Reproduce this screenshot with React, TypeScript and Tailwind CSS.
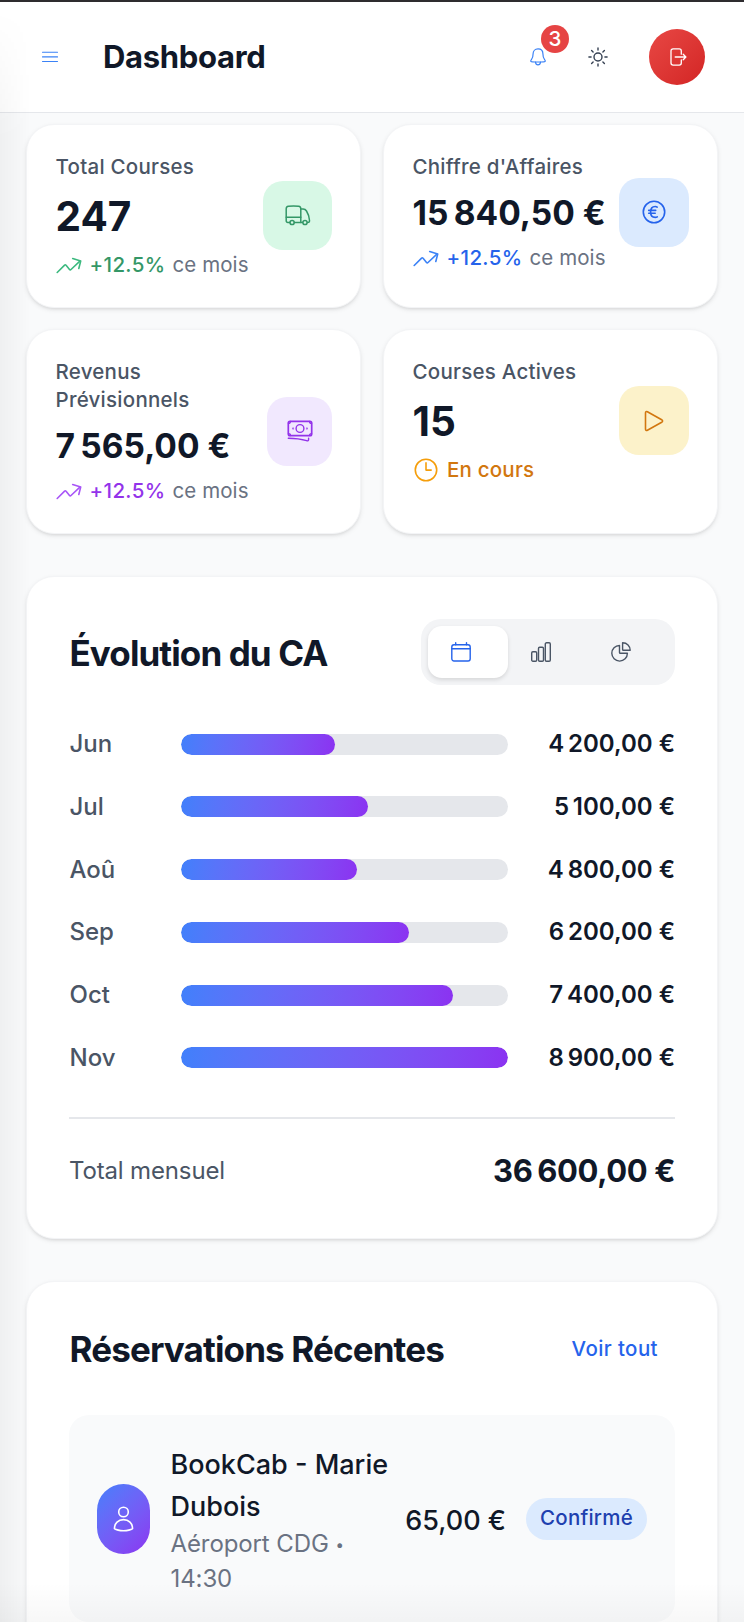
import React from 'react';

interface IconProps {
  className?: string;
}

interface StatCardProps {
  label: string;
  labelClass?: string;
  value: string;
  valueClass: string;
  tileClass: string;
  icon: React.ReactNode;
  footer: React.ReactNode;
}

interface MonthRevenue {
  month: string;
  amount: number;
}

const revenues: MonthRevenue[] = [
  { month: 'Jun', amount: 4200 },
  { month: 'Jul', amount: 5100 },
  { month: 'Aoû', amount: 4800 },
  { month: 'Sep', amount: 6200 },
  { month: 'Oct', amount: 7400 },
  { month: 'Nov', amount: 8900 },
];

const maxRevenue = Math.max(...revenues.map((r) => r.amount));
const totalRevenue = revenues.reduce((sum, r) => sum + r.amount, 0);

const formatEuro = (amount: number) => {
  const [units, cents] = amount.toFixed(2).split('.');
  return `${units.replace(/\B(?=(\d{3})+(?!\d))/g, ' ')},${cents} €`;
};

// The thousands separator is a narrow gap, the one before the euro sign a regular space
const Money: React.FC<{ amount: string }> = ({ amount }) => {
  const [number, currency] = [amount.slice(0, -2), amount.slice(-1)];
  const groups = number.split(' ');
  return (
    <span className="whitespace-nowrap">
      {groups.map((group, i) => (
        <span key={i} className={i > 0 ? 'ml-[0.16em]' : ''}>
          {group}
        </span>
      ))}
      &nbsp;{currency}
    </span>
  );
};

const MenuIcon: React.FC<IconProps> = ({ className }) => (
  <svg className={className} width="16" height="12" viewBox="0 0 16 12" fill="none" stroke="currentColor" strokeWidth="1.1" strokeLinecap="round">
    <path d="M.5 1.3h15M.5 5.9h15M.5 10.5h15" />
  </svg>
);

const BellIcon: React.FC<IconProps> = ({ className }) => (
  <svg className={className} width="16" height="18" viewBox="0 0 16 18" fill="none" stroke="currentColor" strokeWidth="1.2" strokeLinecap="round" strokeLinejoin="round">
    <path d="M8 .9C5 .9 3.1 3 3.1 5.8c0 3.9-.6 4.6-1.7 5.9-.5.6-.9 1.2-.5 1.6.4.5 3.300.700 7.100.700s6.700-.200 7.100-.700c.4-.4 0-1-.5-1.600-1.100-1.300-1.700-2-1.700-5.900C12.900 3 11 .9 8 .9Z" />
    <path d="M5.5 14.1c.2 1.700 1.200 2.800 2.500 2.800s2.300-1.100 2.500-2.800" />
  </svg>
);

const SunIcon: React.FC<IconProps> = ({ className }) => (
  <svg className={className} width="20" height="20" viewBox="0 0 20 20" fill="none" stroke="currentColor" strokeWidth="1.4" strokeLinecap="round">
    <circle cx="10" cy="10" r="4" />
    <path d="M10 .9v2.2M10 16.9v2.2M.9 10h2.2M16.9 10h2.2M3.6 3.6l1.500 1.500M14.900 14.900l1.500 1.500M3.600 16.400l1.500-1.500M14.900 5.100l1.500-1.500" />
  </svg>
);

const LogoutIcon: React.FC<IconProps> = ({ className }) => (
  <svg className={className} width="17" height="18" viewBox="0 0 17 18" fill="none" stroke="currentColor" strokeWidth="1.3" strokeLinecap="round" strokeLinejoin="round">
    <path d="M11.3 6.2V3c0-1.400-.7-2.100-2.100-2.100H3.100C1.700.9 1 1.600 1 3v12c0 1.400.7 2.100 2.100 2.100h6.100c1.400 0 2.100-.7 2.100-2.100v-3.200" />
    <path d="M5.2 9h10.600M13.200 6.300 15.900 9l-2.700 2.700" />
  </svg>
);

const TruckIcon: React.FC<IconProps> = ({ className }) => (
  <svg className={className} width="26" height="21" viewBox="0 0 26 21" fill="none" stroke="currentColor" strokeWidth="1.5" strokeLinecap="round" strokeLinejoin="round">
    <path d="M4.700 17.500H2.900C1.800 17.500 1.200 16.900 1.200 15.800V3.800C1.200 2 1.700 1.500 3.400 1.300 6.500.9 10.500.9 13.700 1.300c1.600.2 2.100.8 2.100 2.500v13.700" />
    <path d="M1.200 12.200h14.600M9.400 17.500h8M15.800 4h2.300c1.600 0 2.500.5 3.400 2 1.900 3.100 2.800 5.900 3 9.200.1 1.600-.3 2.300-2 2.300" />
    <circle cx="7.1" cy="17.5" r="2.1" />
    <circle cx="20" cy="17.5" r="2.1" />
  </svg>
);

const EuroIcon: React.FC<IconProps> = ({ className }) => (
  <svg className={className} width="24" height="24" viewBox="0 0 24 24" fill="none" stroke="currentColor" strokeWidth="1.6" strokeLinecap="round">
    <circle cx="12" cy="12" r="10.7" />
    <path d="M15.200 7.100c-.6-.4-1.300-.6-2-.6-2.900 0-4.600 2.300-4.600 5.500s1.700 5.400 4.600 5.400c.8 0 1.500-.2 2.100-.5M6.700 10.400h7M6.700 13.200h6.500" />
  </svg>
);

const CashIcon: React.FC<IconProps> = ({ className }) => (
  <svg className={className} width="26" height="22" viewBox="0 0 26 22" fill="none" stroke="currentColor" strokeWidth="1.4" strokeLinecap="round" strokeLinejoin="round">
    <rect x="1.3" y="1.3" width="23.4" height="14.4" rx="1.7" strokeWidth="1.7" />
    <path d="M1.500 3.400c1.200 0 1.900-.7 1.900-1.900M24.500 3.400c-1.200 0-1.900-.7-1.900-1.900M1.500 13.600c1.200 0 1.900.7 1.900 1.900M24.500 13.600c-1.200 0-1.900.7-1.900 1.900" />
    <circle cx="13" cy="8.5" r="3.9" />
    <circle cx="6.1" cy="8.5" r=".3" />
    <circle cx="19.9" cy="8.5" r=".3" />
    <path d="M1.300 18.200c7.700 0 12.600.7 18.300 2.500 1.300.4 2-.1 2-1.400v-1.100" />
  </svg>
);

const PlayIcon: React.FC<IconProps> = ({ className }) => (
  <svg className={className} width="20" height="22" viewBox="0 0 20 22" fill="none" stroke="currentColor" strokeWidth="1.6" strokeLinejoin="round">
    <path d="M1.500 2.900v16.200c0 1.200.8 1.700 1.900 1.100l14.300-7.900c1.200-.7 1.200-1.900 0-2.600L3.400 1.800c-1.100-.6-1.900-.1-1.900 1.100Z" />
  </svg>
);

const TrendIcon: React.FC<IconProps> = ({ className }) => (
  <svg className={className} width="26" height="17" viewBox="0 0 26 17" fill="none" stroke="currentColor" strokeWidth="1.6" strokeLinecap="round" strokeLinejoin="round">
    <path d="M1.200 15.500 8.600 8.100c.5-.5.9-.5 1.300 0l3.600 4.300c.5.600 1 .600 1.500.1l8.900-8.400" />
    <path d="M16.700 1.500l8 2.600-1.900 7.400" />
  </svg>
);

const ClockIcon: React.FC<IconProps> = ({ className }) => (
  <svg className={className} width="24" height="24" viewBox="0 0 24 24" fill="none" stroke="currentColor" strokeWidth="1.6" strokeLinecap="round" strokeLinejoin="round">
    <circle cx="12" cy="12" r="10.7" />
    <path d="M12 4.900v7.200h5.200" />
  </svg>
);

const CalendarIcon: React.FC<IconProps> = ({ className }) => (
  <svg className={className} width="20" height="20" viewBox="0 0 20 20" fill="none" stroke="currentColor" strokeWidth="1.4" strokeLinecap="round" strokeLinejoin="round">
    <rect x=".8" y="2.7" width="18.4" height="16.3" rx="2.2" />
    <path d="M.8 6.800h18.400M4.700.7v2M15.500.7v2" />
  </svg>
);

const BarsIcon: React.FC<IconProps> = ({ className }) => (
  <svg className={className} width="20" height="20" viewBox="0 0 20 20" fill="none" stroke="currentColor" strokeWidth="1.4">
    <rect x=".7" y="9.7" width="5" height="9.5" rx="1.2" />
    <rect x="7.5" y="5.2" width="5" height="14" rx="1.2" />
    <rect x="14.3" y=".8" width="5" height="18.4" rx="1.2" />
  </svg>
);

const PieIcon: React.FC<IconProps> = ({ className }) => (
  <svg className={className} width="20" height="20" viewBox="0 0 20 20" fill="none" stroke="currentColor" strokeWidth="1.4" strokeLinejoin="round">
    <path d="M8.500 3.500a7.800 7.800 0 1 0 7.900 7.800H9.300c-.6 0-.8-.2-.8-.8Z" />
    <path d="M11.600.8v6.700c0 .6.200.8.8.8h6.800C19.200 4 16 .8 11.600.8Z" />
  </svg>
);

const PersonIcon: React.FC<IconProps> = ({ className }) => (
  <svg className={className} width="21" height="26" viewBox="0 0 21 26" fill="none" stroke="currentColor" strokeWidth="1.6" strokeLinejoin="round">
    <circle cx="10.5" cy="6" r="4.8" />
    <path d="M1.400 22.500c.2-5.100 3.800-8.900 9.100-8.900s8.900 3.800 9.100 8.900c-2.200 1.600-5.400 2.200-9.100 2.200s-6.900-.6-9.100-2.200Z" />
  </svg>
);

const Card: React.FC<{ className: string; children: React.ReactNode }> = ({ className, children }) => (
  <section
    className={`bg-white rounded-[28px] border border-gray-100 shadow-[0_2px_5px_rgba(0,0,0,0.08),0_2px_3px_-1px_rgba(0,0,0,0.08)] ${className}`}
  >
    {children}
  </section>
);

const StatCard: React.FC<StatCardProps> = ({ label, labelClass = '', value, valueClass, tileClass, icon, footer }) => (
  <Card className="pl-[28.5px] pr-7 pt-[27.5px]">
    <div className="flex items-center justify-between">
      <div>
        <p className={`text-[20.5px] leading-7 font-[450] tracking-[0.25px] text-gray-600 ${labelClass}`}>{label}</p>
        <p className={`mt-3 font-bold text-gray-900 ${valueClass}`}>
          {value.includes('€') ? <Money amount={value} /> : value}
        </p>
        <div className="mt-[10.5px] flex items-center text-[20.5px] leading-7 whitespace-nowrap">{footer}</div>
      </div>
      <div className={`h-[69px] shrink-0 rounded-[20px] flex items-center justify-center ${tileClass}`}>{icon}</div>
    </div>
  </Card>
);

const Trend: React.FC<{ iconClass: string; textClass: string }> = ({ iconClass, textClass }) => (
  <>
    <TrendIcon className={iconClass} />
    <span className={`ml-[8px] font-medium tracking-[0.35px] ${textClass}`}>+12.5%</span>
    <span className="ml-[7px] tracking-[0.1px] text-gray-500">ce mois</span>
  </>
);

const Header: React.FC = () => (
  <header className="h-[113px] shrink-0 bg-white border-t-2 border-t-[#2e2c2f] border-b border-b-gray-200 flex items-center justify-between pl-[42px] pr-[39px]">
    <div className="flex items-center">
      <MenuIcon className="text-[#3b82f6]" />
      <h1 className="ml-[45px] text-[31px] font-bold tracking-[-0.3px] text-gray-900">Dashboard</h1>
    </div>
    <div className="flex items-center">
      <div className="relative">
        <BellIcon className="text-[#3b82f6]" />
        <span className="absolute -top-[23px] left-[11px] w-7 h-7 rounded-full bg-[#e64444] text-white text-[20.5px] font-medium flex items-center justify-center">
          3
        </span>
      </div>
      <SunIcon className="ml-[42px] text-gray-700" />
      <button className="ml-[41px] w-14 h-14 rounded-full bg-linear-135 from-[#e84744] to-[#d32424] text-white flex items-center justify-center">
        <LogoutIcon className="ml-[3px]" />
      </button>
    </div>
  </header>
);

const RevenueCard: React.FC = () => (
  <Card className="mt-[42px] h-[663px] px-[42px] pt-[42px]">
    <div className="flex items-center justify-between">
      <h2 className="pt-[2px] pl-[0.5px] text-[35px] font-bold tracking-[-0.9px] text-gray-900">Évolution du CA</h2>
      <div className="flex w-[254px] h-[66px] p-[7px] rounded-[20px] bg-gray-100 text-gray-600">
        <button className="w-20 rounded-[14px] bg-white shadow-[0_2px_4px_rgba(0,0,0,0.12)] text-[#2563eb] pl-[23px]">
          <CalendarIcon />
        </button>
        <button className="w-20 pl-[23px]">
          <BarsIcon />
        </button>
        <button className="w-20 pl-[23px]">
          <PieIcon />
        </button>
      </div>
    </div>

    <div className="mt-[41.5px] flex flex-col gap-[27.8px]">
      {revenues.map(({ month, amount }) => (
        <div key={month} className="flex items-center h-[35px]">
          <span className="w-[111.5px] pl-[0.5px] text-[24px] font-[450] text-gray-600">{month}</span>
          <div className="w-[327.5px] h-[21px] rounded-full bg-gray-200 overflow-hidden">
            <div
              className="h-full rounded-full bg-linear-100 from-[#4080fb] to-[#8b32f1]"
              style={{ width: `${(amount / maxRevenue) * 100}%` }}
            />
          </div>
          <span className="flex-1 text-right text-[24px] font-semibold text-gray-900">
            <Money amount={formatEuro(amount)} />
          </span>
        </div>
      ))}
    </div>

    <div className="mt-[42px] pt-[32px] border-t-2 border-gray-200 flex items-center justify-between">
      <span className="text-[24px] tracking-[-0.15px] text-gray-600">Total mensuel</span>
      <span className="text-[31px] leading-[40px] font-bold tracking-[-0.4px] text-gray-900">
        <Money amount={formatEuro(totalRevenue)} />
      </span>
    </div>
  </Card>
);

const BookingsCard: React.FC = () => (
  <Card className="mt-[42px] h-[420px] px-[42px] pt-[42px]">
    <div className="flex items-center justify-between h-[50px]">
      <h2 className="pt-px pl-[0.5px] text-[35px] font-bold tracking-[-0.87px] text-gray-900">Réservations Récentes</h2>
      <a className="mr-[17px] text-[20.5px] font-medium tracking-[0.4px] text-[#2563eb]">Voir tout</a>
    </div>
    <div className="mt-[41px] h-[207px] rounded-[20px] bg-gray-50 px-7 flex items-center">
      <div className="w-[53px] h-[70px] shrink-0 rounded-full bg-linear-135 from-[#4080fb] to-[#8b32f1] text-white flex items-center justify-center">
        <PersonIcon />
      </div>
      <div className="ml-[20.5px] w-[220px]">
        <p className="pt-[2px] text-[27px] leading-[42px] font-[450] text-gray-900">BookCab - Marie Dubois</p>
        <p className="-mt-[2px] w-[190px] text-[24px] leading-[35px] tracking-[-0.1px] text-gray-500">
          Aéroport CDG <span className="inline-block align-[2px] text-[15px] leading-none">•</span> 14:30
        </p>
      </div>
      <span className="ml-auto pt-[6px] text-[27px] font-medium text-gray-900">
        <Money amount="65,00 €" />
      </span>
      <span className="ml-5 w-[121px] h-[42px] rounded-full bg-[#dbeafe] text-[#1e40af] text-[20.5px] font-medium tracking-[0.2px] flex items-center justify-center">
        Confirmé
      </span>
    </div>
  </Card>
);

const App: React.FC = () => {
  return (
    <div className="relative w-[744px] h-[1622px] overflow-hidden bg-gray-50 font-['Inter',sans-serif] flex flex-col">
      <Header />
      <main className="px-[26px] pt-[11px]">
        <div className="grid grid-cols-2 gap-x-[22px] gap-y-[21px] grid-rows-[184px_205px]">
          <StatCard
            label="Total Courses"
            value="247"
            valueClass="text-[40.5px] leading-[48px]"
            tileClass="w-[69px] bg-[#d8f8e6] text-[#349767]"
            icon={<TruckIcon />}
            footer={<Trend iconClass="text-[#3cb97f]" textClass="text-[#349767]" />}
          />
          <StatCard
            label="Chiffre d'Affaires"
            value="15 840,50 €"
            valueClass="text-[33.5px] leading-[41px]"
            tileClass="w-[70px] bg-[#dbeafe] text-[#2563eb]"
            icon={<EuroIcon />}
            footer={<Trend iconClass="text-[#3b82f6]" textClass="text-[#2563eb]" />}
          />
          <StatCard
            label="Revenus Prévisionnels"
            labelClass="w-[150px]"
            value="7 565,00 €"
            valueClass="text-[33.5px] leading-[41px]"
            tileClass="w-[65px] bg-[#f1e8fe] text-[#9333ea]"
            icon={<CashIcon />}
            footer={<Trend iconClass="text-[#a855f7]" textClass="text-[#9333ea]" />}
          />
          <StatCard
            label="Courses Actives"
            value="15"
            valueClass="text-[40.5px] leading-[48px]"
            tileClass="w-[70px] bg-[#fcf2ca] text-[#d2770f]"
            icon={<PlayIcon />}
            footer={
              <>
                <ClockIcon className="ml-px text-[#f59e0b]" />
                <span className="ml-[9.5px] font-medium tracking-[0.2px] text-[#d2770f]">En cours</span>
              </>
            }
          />
        </div>
        <RevenueCard />
        <BookingsCard />
      </main>

      {/* soft shading along the left edge and the bottom */}
      <div className="absolute left-0 top-0 bottom-0 w-[30px] pointer-events-none bg-linear-to-r from-black/4 to-transparent mask-[linear-gradient(to_bottom,transparent_10px,black_140px)]" />
      <div className="absolute left-0 right-0 bottom-0 h-10 pointer-events-none bg-linear-to-t from-black/3 to-transparent" />
    </div>
  );
};

export default App;
